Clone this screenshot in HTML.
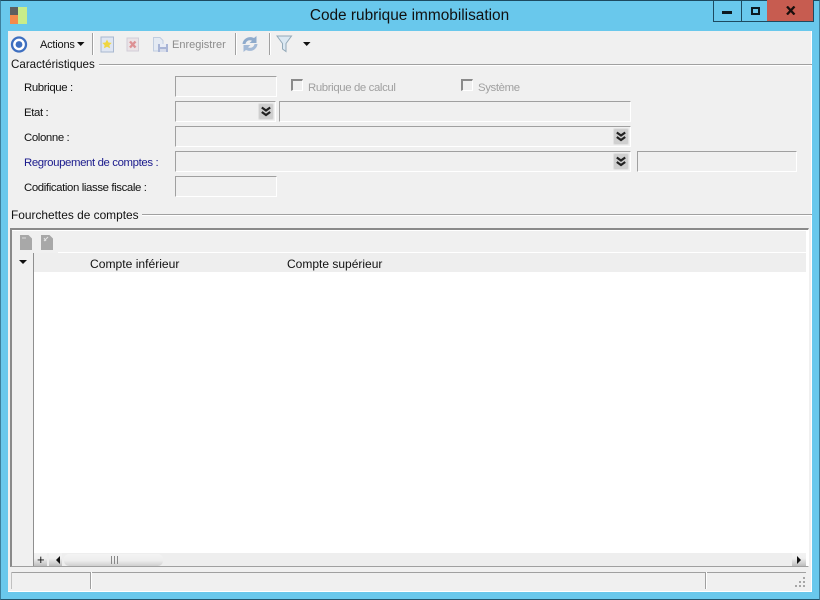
<!DOCTYPE html>
<html><head><meta charset="utf-8">
<style>
html,body{margin:0;padding:0}
body{width:820px;height:600px;position:relative;overflow:hidden;background:#69c8ec;font-family:"Liberation Sans",sans-serif;font-size:11.4px;color:#111}
.a{position:absolute}
.t{position:absolute;white-space:nowrap;line-height:14px}
.l{letter-spacing:-.38px}
.f{position:absolute;box-sizing:border-box;border:1px solid #fff;border-top:1px solid #a0a0a0;border-left:1px solid #a0a0a0;background:#f0f0f0}
.h{position:absolute;height:1px;background:#a0a0a0;box-shadow:0 1px 0 #fff}
.v{position:absolute;width:1px;background:#a0a0a0;box-shadow:1px 0 0 #fff}
.c{position:absolute;width:12px;height:12px;box-sizing:border-box;border:1px solid #fff;border-top:2px solid #8a8a8a;border-left:2px solid #8a8a8a;background:#efefef}
.g{color:#a0a0a0}
</style></head><body>
<div class="a" style="left:0;top:0;width:818px;height:598px;border:1px solid #3d7f9c;border-top-color:#1d4a60;border-bottom-color:#23566e"></div>
<div class="a" style="left:8px;top:31px;width:804px;height:561px;background:#f0f0f0"></div>
<div class="a" style="left:811px;top:31px;width:1px;height:561px;background:#fff"></div>
<div class="a" style="left:8px;top:591px;width:804px;height:1px;background:#fff"></div>

<!-- title bar -->
<svg class="a" style="left:10px;top:7px" width="17" height="17"><rect x="0" y="0" width="8" height="8" fill="#5f5f5f"/><rect x="0" y="8" width="8" height="9" fill="#f58a4b"/><rect x="8" y="0" width="9" height="17" fill="#c8ec8a"/></svg>
<div class="t" style="left:250px;width:319px;top:7px;line-height:18px;text-align:center;font-size:15.4px;color:#111">Code rubrique immobilisation</div>
<div class="a" style="left:713px;top:0;width:29px;height:22px;border:1px solid #1d4a60;border-top:0;box-sizing:border-box"></div>
<div class="a" style="left:741px;top:0;width:27px;height:22px;border:1px solid #1d4a60;border-top:0;border-left:0;box-sizing:border-box"></div>
<div class="a" style="left:767px;top:0;width:47px;height:22px;background:#c75c50;border:1px solid #1d4a60;border-top:0;border-left:0;box-sizing:border-box"></div>
<div class="a" style="left:722px;top:11px;width:10px;height:3px;background:#0c1a20"></div>
<div class="a" style="left:751px;top:7px;width:5px;height:4px;border:2px solid #0c1a20"></div>
<svg class="a" style="left:786px;top:6px" width="10" height="9"><path d="M1 0.5L8.5 8.5M8.5 0.5L1 8.5" stroke="#1a0f0d" stroke-width="2.3" fill="none"/></svg>

<!-- toolbar -->
<svg class="a" style="left:10px;top:35px" width="18" height="18"><circle cx="9" cy="9.500" r="7" fill="#fff" stroke="#3e6fc0" stroke-width="2.300"/><circle cx="9" cy="9.500" r="3.400" fill="#3e6fc0"/></svg>
<div class="t" style="left:40px;top:38px;font-size:11px;letter-spacing:-.2px">Actions</div>
<svg class="a" style="left:77px;top:42px" width="8" height="5"><path d="M0 0H7.5L3.7 4Z" fill="#111"/></svg>
<div class="v" style="left:92px;top:33px;height:22px"></div>
<svg class="a" style="left:100px;top:36px" width="15" height="17"><rect x="1" y="1" width="12.500" height="15" fill="#dfe6f2" stroke="#a9b8d0"/><path d="M7 3.500l1.500 3 3.200 .4-2.300 2.200.6 3.200L7 10.800l-3 1.500.6-3.200-2.300-2.200 3.200-.4z" fill="#f0d640"/></svg>
<svg class="a" style="left:126px;top:37px" width="14" height="15"><rect x="1" y="1" width="11.500" height="13" fill="#ebe3e6" stroke="#d2ced8"/><path d="M4 4.500l5.500 6M9.500 4.500l-5.500 6" stroke="#dd9094" stroke-width="2.400"/></svg>
<svg class="a" style="left:152px;top:36px" width="17" height="17"><path d="M1.500 1.500H8L11 4.500V15H1.500Z" fill="#e4eaf3" stroke="#c0cde0"/><rect x="6" y="8" width="10" height="8" fill="#a9b5d6"/><rect x="8" y="8" width="6" height="3" fill="#e8ecf5"/><rect x="8" y="13" width="6" height="3" fill="#d5dbea"/></svg>
<div class="t g" style="left:172px;top:38px;font-size:11px;color:#8c8c8c">Enregistrer</div>
<div class="v" style="left:235px;top:33px;height:22px"></div>
<svg class="a" style="left:241px;top:35px" width="18" height="18"><path d="M1.500 9C2 3.500 8 .5 13 3L15.500 1V8H8.500L11 5.800C8 4.200 5 6 4.500 9Z" fill="#8fabcc"/><path d="M16.500 9C16 14.500 10 17.500 5 15L2.500 17V10H9.500L7 12.200C10 13.800 13 12 13.500 9Z" fill="#a4bad6"/></svg>
<div class="v" style="left:269px;top:33px;height:22px"></div>
<svg class="a" style="left:276px;top:35px" width="17" height="18"><path d="M1 1H15.500L10 8.500V16.500L6.500 14V8.500Z" fill="#dbe8f2" stroke="#93a9b8" stroke-width="1"/></svg>
<svg class="a" style="left:303px;top:42px" width="8" height="5"><path d="M0 0H7.500L3.700 4Z" fill="#111"/></svg>

<!-- group 1 -->
<div class="t" style="left:11px;top:58px;font-size:11.6px">Caractéristiques</div>
<div class="h" style="left:99px;top:64px;width:713px"></div>

<div class="t l" style="left:24px;top:81px">Rubrique :</div>
<div class="f" style="left:175px;top:76px;width:102px;height:21px"></div>
<div class="c" style="left:291px;top:79px"></div>
<div class="t g l" style="left:308px;top:81px">Rubrique de calcul</div>
<div class="c" style="left:461px;top:79px"></div>
<div class="t g l" style="left:478px;top:81px">Système</div>

<div class="t l" style="left:24px;top:106px">Etat :</div>
<div class="f" style="left:175px;top:101px;width:101px;height:21px"></div>
<div class="f" style="left:279px;top:101px;width:352px;height:21px"></div>
<svg class="a" style="left:258px;top:103px" width="16" height="17"><rect x=".5" y=".5" width="15" height="16" rx="1.500" fill="#cfcfcf" stroke="#e2e2e2"/><path d="M3.800 4.500L8 7.500L12.200 4.500M3.800 9L8 12L12.200 9" stroke="#222" stroke-width="2.200" fill="none"/></svg>

<div class="t l" style="left:24px;top:131px">Colonne :</div>
<div class="f" style="left:175px;top:126px;width:456px;height:21px"></div>
<svg class="a" style="left:613px;top:128px" width="16" height="17"><rect x=".5" y=".5" width="15" height="16" rx="1.500" fill="#cfcfcf" stroke="#e2e2e2"/><path d="M3.800 4.500L8 7.500L12.200 4.500M3.800 9L8 12L12.200 9" stroke="#222" stroke-width="2.200" fill="none"/></svg>

<div class="t l" style="left:24px;top:156px;color:#1a1a8c">Regroupement de comptes :</div>
<div class="f" style="left:175px;top:151px;width:456px;height:21px"></div>
<svg class="a" style="left:613px;top:153px" width="16" height="17"><rect x=".5" y=".5" width="15" height="16" rx="1.500" fill="#cfcfcf" stroke="#e2e2e2"/><path d="M3.800 4.500L8 7.500L12.200 4.500M3.800 9L8 12L12.200 9" stroke="#222" stroke-width="2.200" fill="none"/></svg>
<div class="f" style="left:637px;top:151px;width:160px;height:21px"></div>

<div class="t l" style="left:24px;top:181px">Codification liasse fiscale :</div>
<div class="f" style="left:175px;top:176px;width:102px;height:21px"></div>

<!-- group 2 -->
<div class="t" style="left:11px;top:208px;font-size:11.9px">Fourchettes de comptes</div>
<div class="h" style="left:142px;top:214px;width:670px"></div>

<!-- grid -->
<div class="a" style="left:10px;top:228px;width:799px;height:339px;box-sizing:border-box;border:2px solid #8a8a8a;border-right:1px solid #fff;border-bottom:1px solid #a0a0a0;background:#f0f0f0"></div>
<div class="a" style="left:12px;top:230px;width:796px;height:1px;background:#fff"></div>
<svg class="a" style="left:20px;top:235px" width="13" height="15"><path d="M0 0H8.500L12 3.500V15H0Z" fill="#a8a8a8"/><path d="M2 3H6" stroke="#ddd"/></svg>
<svg class="a" style="left:41px;top:235px" width="13" height="15"><path d="M0 0H8.500L12 3.500V15H0Z" fill="#a8a8a8"/><path d="M3 6L7 2M3 3L5 6" stroke="#e6e6e6"/></svg>
<div class="a" style="left:58px;top:252px;width:748px;height:1px;background:#fff"></div>
<div class="a" style="left:34px;top:253px;width:772px;height:19px;background:#eeeeee"></div>
<div class="a" style="left:33px;top:253px;width:1px;height:313px;background:#8f8f8f"></div>
<div class="a" style="left:34px;top:272px;width:774px;height:281px;background:#fff"></div>
<div class="a" style="left:806px;top:231px;width:2px;height:335px;background:#fff"></div>
<svg class="a" style="left:19px;top:260px" width="8" height="5"><path d="M0 0H8L4 4Z" fill="#111"/></svg>
<div class="t" style="left:90px;top:257px;font-size:12.1px">Compte inférieur</div>
<div class="t" style="left:287px;top:257px;font-size:12px">Compte supérieur</div>

<!-- scrollbar -->
<div class="a" style="left:34px;top:553px;width:772px;height:13px;background:#eeeeee"></div>
<div class="a" style="left:34px;top:553px;width:13px;height:13px;background:linear-gradient(#f2f2f2,#f0f0f0 40%,#bdbdbd)"></div>
<div class="t" style="left:37px;top:553px;font-size:13px">+</div>
<div class="a" style="left:49px;top:553px;width:13px;height:13px;background:linear-gradient(#f2f2f2,#f0f0f0 40%,#bdbdbd)"></div>
<svg class="a" style="left:55px;top:556px" width="6" height="9"><path d="M5 0V8L1 4Z" fill="#111"/></svg>
<div class="a" style="left:64px;top:554px;width:99px;height:12px;border-radius:5px;background:linear-gradient(#f4f4f4,#ededed 55%,#cfcfcf)"></div>
<div class="a" style="left:111px;top:556px;width:1px;height:8px;background:#888;box-shadow:3px 0 0 #888,6px 0 0 #888"></div>
<div class="a" style="left:792px;top:553px;width:14px;height:13px;background:linear-gradient(#f2f2f2,#f0f0f0 40%,#bdbdbd)"></div>
<svg class="a" style="left:796px;top:556px" width="6" height="9"><path d="M1 0V8L5 4Z" fill="#111"/></svg>

<!-- status bar -->
<div class="a" style="left:11px;top:572px;width:795px;height:1px;background:#a0a0a0"></div>
<div class="a" style="left:11px;top:572px;width:1px;height:17px;background:#c0c0c0"></div>
<div class="v" style="left:90px;top:572px;height:17px"></div>
<div class="v" style="left:705px;top:572px;height:17px"></div>
<svg class="a" style="left:795px;top:577px" width="12" height="12" fill="#a6a6a6"><rect x="8" y="0" width="2" height="2"/><rect x="4" y="4" width="2" height="2"/><rect x="8" y="4" width="2" height="2"/><rect x="0" y="8" width="2" height="2"/><rect x="4" y="8" width="2" height="2"/><rect x="8" y="8" width="2" height="2"/></svg>
</body></html>
